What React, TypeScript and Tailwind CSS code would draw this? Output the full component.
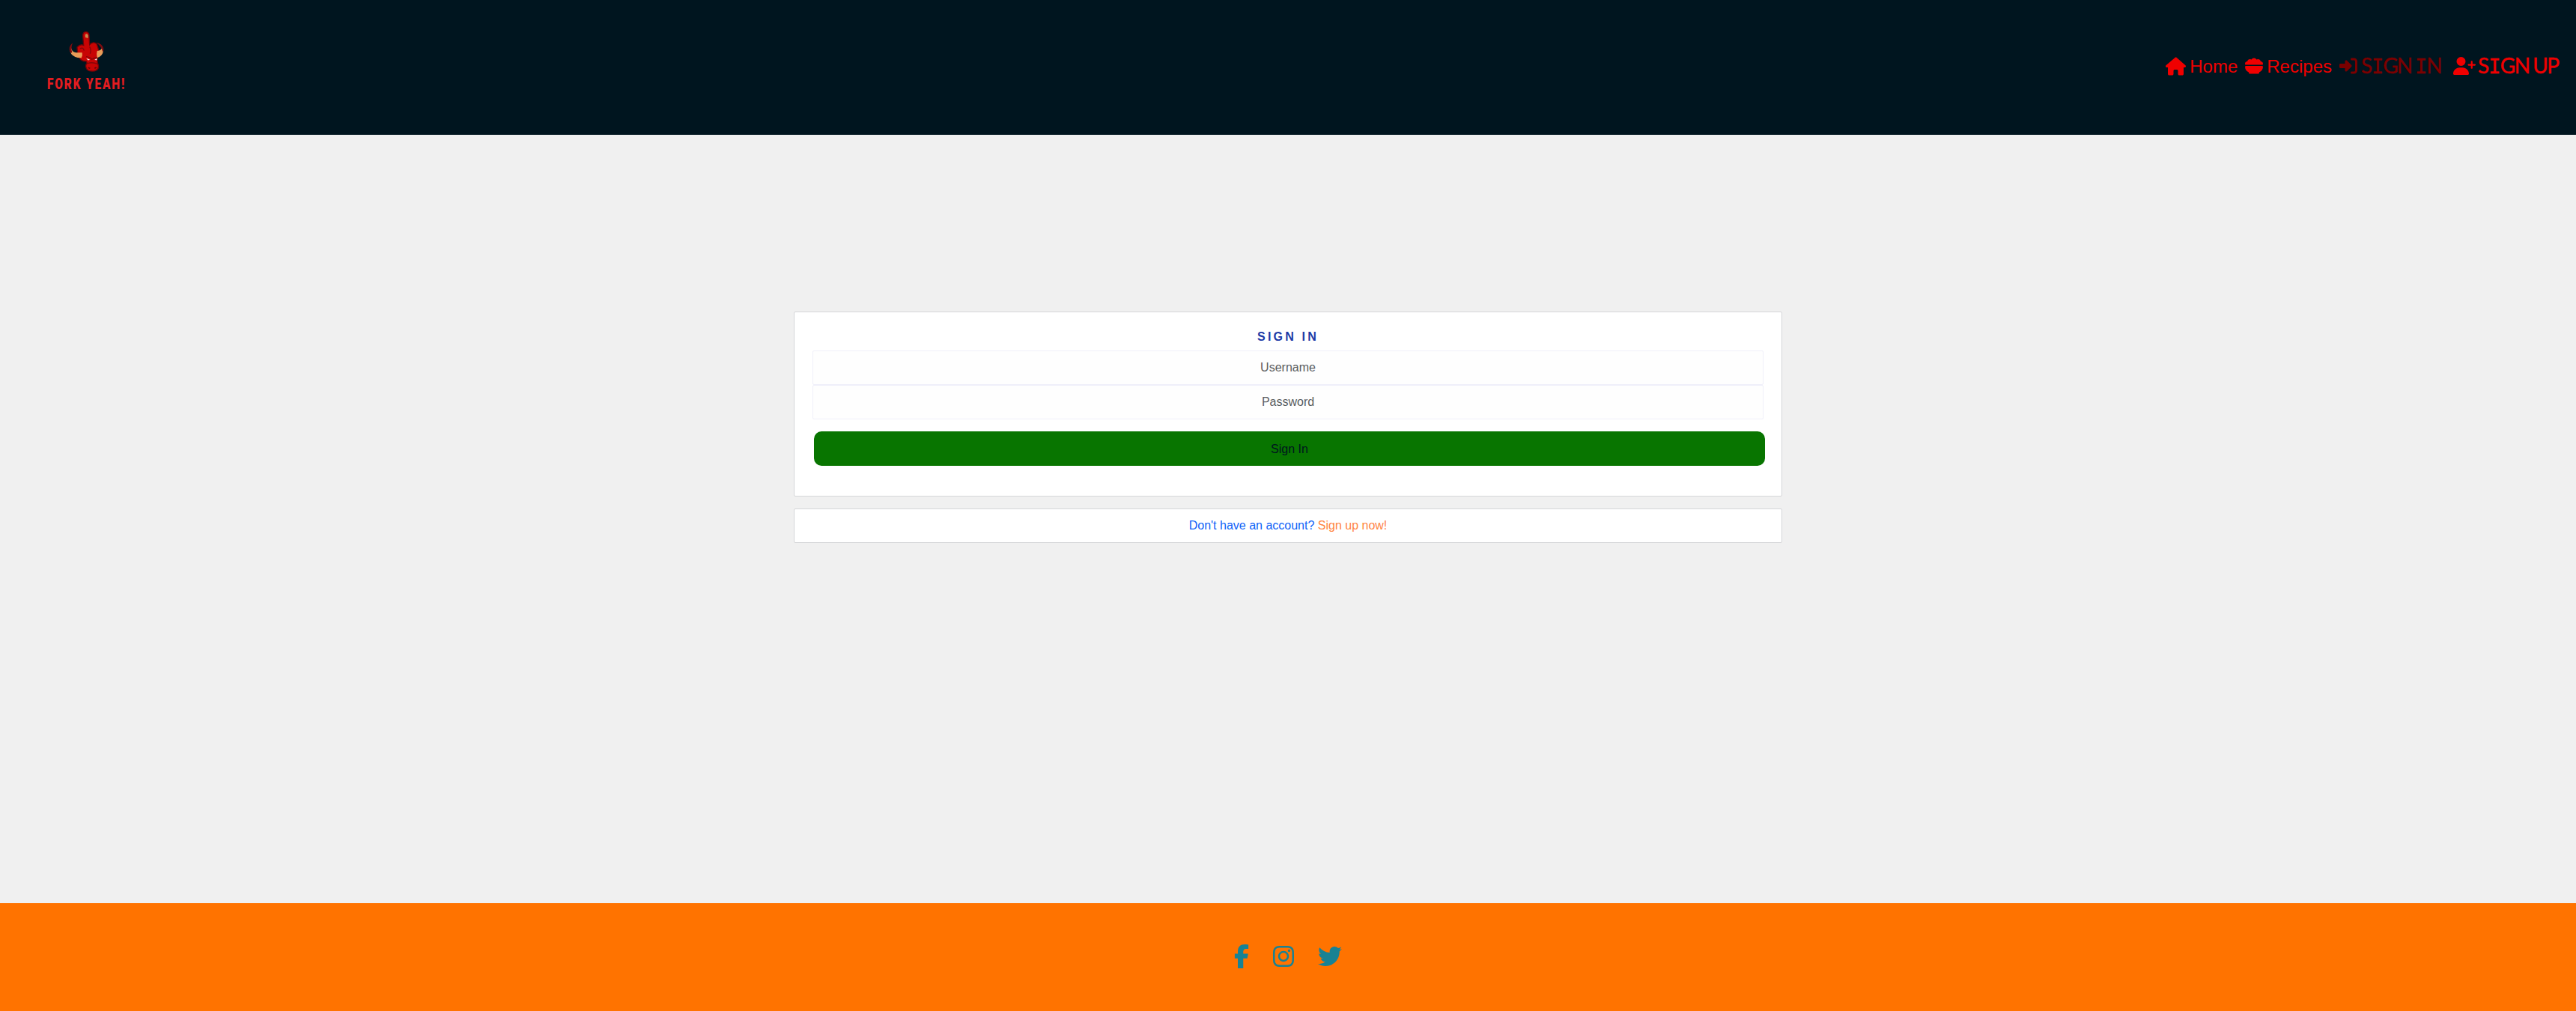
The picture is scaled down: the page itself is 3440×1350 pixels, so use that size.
import React from "react";
import { FaHouse, FaBowlFood, FaRightToBracket, FaUserPlus, FaFacebookF, FaInstagram, FaTwitter } from "react-icons/fa6";

function Logo() {
  return (
    <a href="#" className="ml-[60px] mt-[35px] flex w-[112px] flex-col items-start">
      <svg width="60" height="62" viewBox="0 0 180 186" className="ml-[25px] block">
        <path d="M80 76 L77 40 Q76 22 90 22 Q103 24 102 40 L104 74 Q120 58 133 72 L140 95 L136 122 Q133 138 136 148 Q142 158 138 170 Q130 182 112 180 Q94 180 90 166 Q86 156 94 148 L90 140 Q72 142 64 128 L56 108 L54 84 Q66 70 80 76Z" fill="#c80404" stroke="#6d0508" strokeWidth="4" />
        <path d="M86 34 Q94 26 98 36 L98 48 L87 45Z" fill="#c98a50" />
        <path d="M29 78 Q30 104 50 106 L74 106 Q77 117 71 127 Q44 128 31 112 Q20 94 29 78Z" fill="#e89c58" />
        <path d="M36 67 Q18 82 25 102 Q29 110 34 104 Q28 88 36 67Z" fill="#7d0c10" />
        <path d="M154 84 Q152 98 134 99 Q130 112 134 127 Q154 121 158 103 Q160 92 154 84Z" fill="#e89c58" />
        <path d="M130 65 Q154 68 160 90 Q161 99 156 102 Q152 80 130 65Z" fill="#7d0c10" />
        <path d="M90 122 Q106 123 113 133 Q121 126 134 126 M94 150 Q114 142 136 151 M66 90 Q78 82 82 98 M104 82 Q112 96 106 110" fill="none" stroke="#850609" strokeWidth="4" />
        <path d="M98 166 L106 169 M124 169 L131 165" stroke="#650508" strokeWidth="5" />
        <path d="M92 129 L104 134 L98 136Z M125 134 L133 130 L132 136Z" fill="#fff" stroke="#fff" strokeWidth="1" />
      </svg>
      <span className="ml-[3px] mt-[2px] origin-left scale-x-[.77] whitespace-nowrap font-[Roboto,sans-serif] text-[20px] font-black leading-[26px] tracking-[2.4px] text-[#e31c20]">FORK YEAH!</span>
    </a>
  );
}

function SlabI() {
  return <span className="inline-block w-[16px] text-center font-['DejaVu_Sans_Mono',monospace] text-[27px]">I</span>;
}

function Field({ label }: { label: string }) {
  return (
    <input placeholder={label} className="block h-[46px] w-full rounded-[2px] border border-[#efeffa] bg-[#fefefe] text-center text-base placeholder:text-[#595c5f]" />
  );
}

export default function App() {
  return (
    <div className="flex h-[1350px] w-full flex-col bg-[#f0f0f0] font-['Liberation_Sans',Arial,sans-serif]">
      <header className="flex h-[180px] items-start justify-between bg-[#00151f]">
        <Logo />
        <nav className="mr-[21px] mt-[70px] flex h-[36px] items-center whitespace-nowrap text-2xl text-[#f00000]">
          <a href="#" className="flex items-center"><FaHouse className="mr-[5px] size-[27px]" /><span className="pt-[2px]">Home</span></a>
          <a href="#" className="ml-[10px] flex items-center"><FaBowlFood className="mr-[5px] size-6" /><span className="pt-[2px]">Recipes</span></a>
          <a href="#" className="ml-[10px] flex items-center text-[#7b0000]">
            <FaRightToBracket className="mr-[5px] size-6" />
            <span className="w-[113px] font-[Lato,sans-serif] text-[28px] tracking-[-2px] [-webkit-text-stroke:0.4px_currentColor] [word-spacing:-1px]">S<SlabI />GN <SlabI />N</span>
          </a>
          <a href="#" className="ml-[10px] flex items-center">
            <FaUserPlus className="mr-[3px] h-6 w-[30px]" />
            <span className="w-[110px] font-[Lato,sans-serif] text-[28px] tracking-[-1.5px] [-webkit-text-stroke:0.4px_currentColor] [word-spacing:-1px]">S<SlabI />GN UP</span>
          </a>
        </nav>
      </header>

      <main className="flex flex-1 flex-col items-center pt-[236px]">
        <section className="h-[247px] w-[1320px] rounded-[2px] border border-[#d5d6d8] bg-white px-6 pt-[21px]">
          <h1 className="h-[30px] text-center text-base font-bold leading-6 tracking-[3.2px] text-[#1d3aa6]">SIGN IN</h1>
          <form>
            <Field label="Username" />
            <Field label="Password" />
            <button type="button" className="ml-[2px] mt-4 block h-[46px] w-[1270px] rounded-[10px] bg-[#087500] pt-[2px] text-center text-base text-[#00151f]">Sign In</button>
          </form>
        </section>
        <section className="mt-4 h-[46px] w-[1320px] rounded-[2px] border border-[#d5d6d8] bg-white text-center leading-[44px] text-[#0d63f8]">
          Don't have an account? <a href="#" className="text-[#ff8442]">Sign up now!</a>
        </section>
      </main>

      <footer className="flex h-36 items-start bg-[#ff7300] pl-[1648px] pt-[55px] text-[#188294]">
        <FaFacebookF className="h-8 w-5" />
        <FaInstagram className="ml-[30px] size-8" />
        <FaTwitter className="ml-[30px] size-8" />
      </footer>
    </div>
  );
}
